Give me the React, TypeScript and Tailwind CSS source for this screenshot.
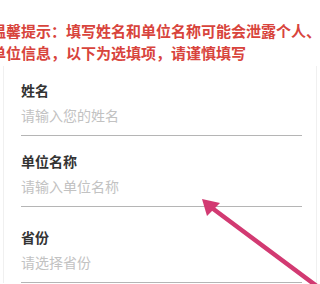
import React from 'react';

const Field = ({ label, placeholder }: { label: string; placeholder: string }) => (
  <div className="pt-[14px]">
    <div className="text-[14px] leading-[20px] font-semibold text-[#333]">{label}</div>
    <div className="mt-[4px] pb-[9px] text-[14px] leading-[22px] text-[#c2c2c2] border-b border-[#b5b5b5] mr-[14px]">
      {placeholder}
    </div>
  </div>
);

export default function App() {
  return (
    <div
      className="relative w-[320px] h-[284px] overflow-hidden bg-white"
      style={{ fontFamily: '"Noto Sans CJK SC", "Noto Sans", sans-serif' }}
    >
      <div className="pt-[20px] ml-[-9px] w-[340px] text-[15px] leading-[22px] font-bold text-[#d8443c]">
        <div className="whitespace-nowrap">温馨提示：填写姓名和单位名称可能会泄露个人、</div>
        <div className="whitespace-nowrap">单位信息，以下为选填项，请谨慎填写</div>
      </div>

      <div className="mt-[2px] mx-[3px] border-x border-[#f0f0f0] pl-[17px]">
        <Field label="姓名" placeholder="请输入您的姓名" />
        <div className="pt-[1px]">
          <Field label="单位名称" placeholder="请输入单位名称" />
        </div>
        <div className="pt-[6px]">
          <Field label="省份" placeholder="请选择省份" />
        </div>
      </div>

      <svg className="absolute left-0 top-0 pointer-events-none" width="320" height="284" viewBox="0 0 320 284">
        <line x1="318" y1="287" x2="212" y2="208" stroke="#d23a72" strokeWidth="4.5" strokeLinecap="round" />
        <polygon points="202,199 220,203 207,216" fill="#d23a72" />
      </svg>
    </div>
  );
}
